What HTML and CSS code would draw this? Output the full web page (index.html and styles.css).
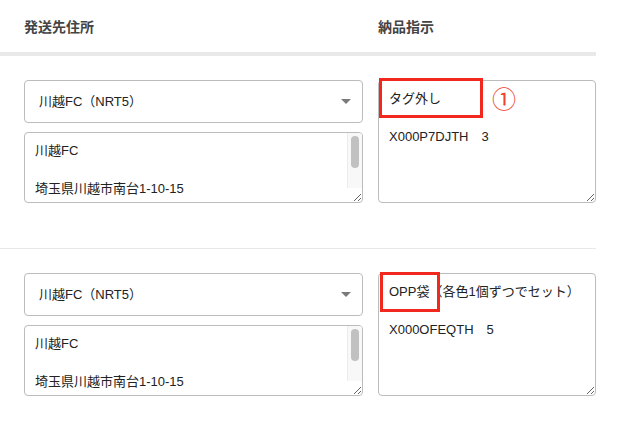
FILE: index.html
```html
<!DOCTYPE html>
<html lang="ja">
<head>
<meta charset="utf-8">
<title>納品指示</title>
<link rel="stylesheet" href="styles.css">
</head>
<body>
<div class="table">
  <div class="head">
    <div class="head-cell">発送先住所</div>
    <div class="head-cell">納品指示</div>
  </div>

  <div class="row">
    <div class="col-l">
      <div class="select-wrap">
        <select class="select"><option>川越FC（NRT5）</option></select>
      </div>
      <div class="addr-wrap">
        <textarea class="addr">川越FC

埼玉県川越市南台1-10-15

〒350-1155</textarea>
        <span class="sbar"><span class="thumb"></span></span>
      </div>
    </div>
    <div class="col-r">
      <textarea class="note">タグ外し

X000P7DJTH　3</textarea>
      <span class="mark mark-1"></span>
      <span class="num">①</span>
    </div>
  </div>

  <div class="row">
    <div class="col-l">
      <div class="select-wrap">
        <select class="select"><option>川越FC（NRT5）</option></select>
      </div>
      <div class="addr-wrap">
        <textarea class="addr">川越FC

埼玉県川越市南台1-10-15

〒350-1155</textarea>
        <span class="sbar"><span class="thumb"></span></span>
      </div>
    </div>
    <div class="col-r">
      <textarea class="note">OPP袋（各色1個ずつでセット）

X000OFEQTH　5</textarea>
      <span class="mark mark-2"></span>
    </div>
  </div>
</div>
</body>
</html>
```

FILE: styles.css
```css
* { box-sizing: border-box; }

body {
  margin: 0;
  background: #fff;
  font-family: "Liberation Sans", "Noto Sans CJK JP", sans-serif;
  color: #222;
}

.table { width: 596px; }

.head {
  display: grid;
  grid-template-columns: 339px 218px;
  column-gap: 15px;
  padding-left: 24px;
  height: 56px;
  align-items: center;
  border-bottom: 4px solid #e9e9e9;
  font-size: 14px;
  font-weight: bold;
  color: #444;
}

.row {
  display: grid;
  grid-template-columns: 339px 218px;
  column-gap: 15px;
  padding: 24px 0 45px 24px;
  border-bottom: 1px solid #e8e8e8;
}

.col-l {
  display: flex;
  flex-direction: column;
  gap: 9px;
}

.col-r { position: relative; }

.select-wrap { position: relative; }

.select {
  appearance: none;
  -webkit-appearance: none;
  display: block;
  width: 100%;
  height: 43px;
  margin: 0;
  padding: 0 30px 0 14px;
  border: 1px solid #bcbcbc;
  border-radius: 4px;
  background: #fff;
  font-family: "Liberation Sans", "Noto Sans CJK JP", sans-serif;
  font-size: 13px;
  color: #222;
}

.select-wrap::after {
  content: "";
  position: absolute;
  right: 12px;
  top: 19px;
  border-left: 5px solid transparent;
  border-right: 5px solid transparent;
  border-top: 5px solid #7a7a7a;
}

.addr-wrap { position: relative; }

.addr, .note {
  display: block;
  width: 100%;
  margin: 0;
  padding: 8px 10px;
  border: 1px solid #bcbcbc;
  border-radius: 4px;
  background: #fff;
  font-family: "Liberation Sans", "Noto Sans CJK JP", sans-serif;
  font-size: 13px;
  line-height: 19px;
  color: #222;
  overflow: hidden;
}

.addr {
  height: 71px;
  padding-right: 26px;
}

.note { height: 123px; }

.sbar {
  position: absolute;
  right: 1px;
  top: 1px;
  bottom: 15px;
  width: 15px;
  background: #f8f8f8;
  border-left: 1px solid #ececec;
  border-top-right-radius: 3px;
}

.thumb {
  position: absolute;
  left: 3px;
  top: 3px;
  width: 8px;
  height: 32px;
  border-radius: 4px;
  background: #c1c1c1;
}

.mark {
  position: absolute;
  border: 3px solid #f0281e;
  pointer-events: none;
}

.mark-1 {
  left: 1px;
  top: -2px;
  width: 104px;
  height: 40px;
}

.mark-2 {
  left: 2px;
  top: -1px;
  width: 60px;
  height: 40px;
}

.num {
  position: absolute;
  left: 114px;
  top: 6px;
  font-family: "Noto Sans CJK JP", sans-serif;
  font-size: 24px;
  line-height: 24px;
  color: #f0402f;
}
```
